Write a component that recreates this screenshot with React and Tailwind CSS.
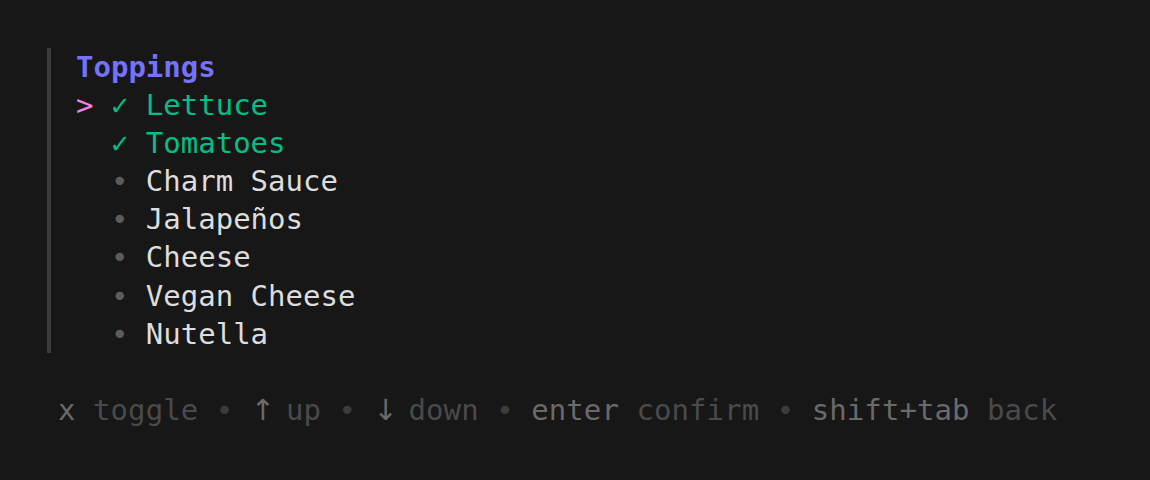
const options = [
  { label: 'Lettuce', selected: true },
  { label: 'Tomatoes', selected: true },
  { label: 'Charm Sauce', selected: false },
  { label: 'Jalapeños', selected: false },
  { label: 'Cheese', selected: false },
  { label: 'Vegan Cheese', selected: false },
  { label: 'Nutella', selected: false },
];

const help = [
  { key: 'x', desc: 'toggle' },
  { key: '↑', desc: 'up', arrow: true },
  { key: '↓', desc: 'down', arrow: true },
  { key: 'enter', desc: 'confirm' },
  { key: 'shift+tab', desc: 'back' },
];

export default function App() {
  const cursor = 0;

  return (
    <div className="w-[1150px] h-[480px] bg-[#171717] pt-[48px] font-['DejaVu_Sans_Mono',monospace] text-[29px] leading-[38.1px] whitespace-pre text-[#dddddd] overflow-hidden">
      {/* Multi select field */}
      <div className="ml-[47px] border-l-[4px] border-[#3a3a3a] pl-[25px]">
        <div className="font-bold text-[#7571f9]">Toppings</div>
        {options.map((opt, i) => (
          <div key={opt.label} className="flex">
            <span className="text-[#f780e2]">{i === cursor ? '> ' : '  '}</span>
            {opt.selected ? (
              <>
                <span className="text-[#02bf87] font-bold">✓ </span>
                <span className="text-[#02bf87]">{opt.label}</span>
              </>
            ) : (
              <>
                <span className="text-[#5c5c5c]">• </span>
                <span>{opt.label}</span>
              </>
            )}
          </div>
        ))}
      </div>

      {/* Help bar */}
      <div className="mt-[38px] pl-[58px] tracking-[0.07px]">
        {help.map((h, i) => (
          <span key={h.key}>
            {h.arrow ? (
              <span className="inline-block w-[17.5px] text-center text-[#6a6a6a] font-['DejaVu_Sans',sans-serif]">{h.key}</span>
            ) : (
              <span className="text-[#6a6a6a]">{h.key}</span>
            )}
            <span> </span>
            <span className="text-[#4a4a4a]">{h.desc}</span>
            {i < help.length - 1 && <span className="text-[#3c3c3c]"> • </span>}
          </span>
        ))}
      </div>
    </div>
  );
}
